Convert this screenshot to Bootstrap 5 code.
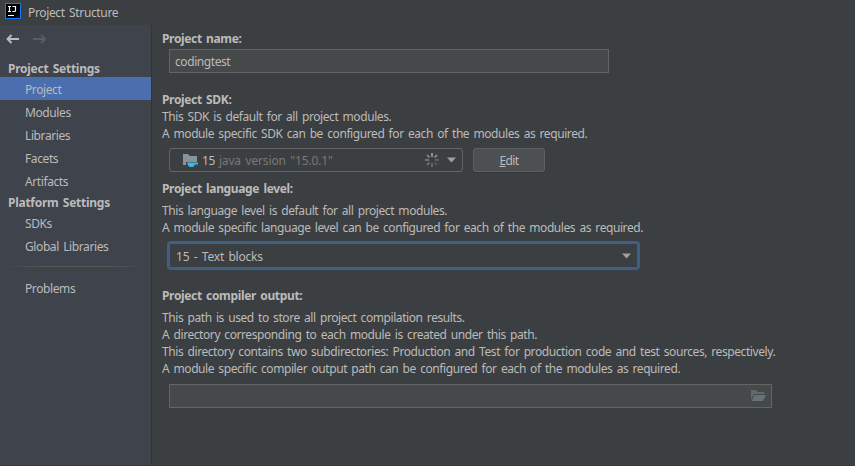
<!DOCTYPE html>
<html lang="en">
<head>
<meta charset="utf-8">
<title>Project Structure</title>
<link href="https://cdn.jsdelivr.net/npm/bootstrap@5.3.0/dist/css/bootstrap.min.css" rel="stylesheet">
<style>
body{background:#3c3f41;color:#bbb;font:12px/17px "Noto Sans","Open Sans",sans-serif;height:466px;overflow:hidden;letter-spacing:-.42px;word-spacing:1.55px}
svg{display:block;flex:none}
.window{height:466px;border-bottom:1px solid #40383d}
.titlebar{height:25px;padding-left:5px;gap:7px;letter-spacing:-.35px}
.logo{margin-bottom:3px}
.sidebar{width:152px;background:#3f434c;border-right:1px solid #323537}
.history{height:28px;padding-left:6px;gap:13px}
.group-title{height:20px;line-height:22px;padding-left:8px;font-weight:700;letter-spacing:-.27px}
.group-title.first{height:24px;line-height:32px}
.entry{height:23px;line-height:26px;padding-left:25px;letter-spacing:-.4px}
.entry.low{line-height:24px}
.entry.selected{background:#4b6eaf}
.divider{height:1px;margin:8px 6px 10px;background:linear-gradient(90deg,transparent,#55564f 20%,#55564f 80%,transparent)}
.content{padding:5px 0 0 10px}
.heading{font-weight:700;height:17px;letter-spacing:-.35px}
.field{height:24px;margin-left:7px;border:1px solid #646464;padding:0 5px}
.filled{background:#45494a}
.combo{border-radius:3px}
.w-name{width:440px;margin-top:2px;margin-bottom:18px}
.sdk-row{margin:6px 0 8px}
.w-sdk{width:294px;padding:0 6px 0 12px}
.lead-in{margin-top:5px}
.w-level{width:471px;margin:6px 0 18px 6px;height:27px;border:2px solid #3d6185;box-shadow:0 0 0 1px #3d6185;border-radius:3px;padding:1px 6px 0;letter-spacing:-.22px}
.w-out{width:603px;margin-top:7px;padding-right:5px}
.edit{width:72px;height:24px;background:#4c5052;border:1px solid #5e6060;border-radius:3px;color:#bbb;font-size:12px;line-height:24px;margin-left:10px;box-shadow:0 1px #36393b;letter-spacing:-.6px}
.version{color:#787878;letter-spacing:-.15px}
.arrow{margin-left:8px}
</style>
<script src="https://cdn.jsdelivr.net/npm/bootstrap@5.3.0/dist/js/bootstrap.bundle.min.js"></script>
</head>
<body>
<div class="window d-flex flex-column">
  <header class="titlebar d-flex align-items-center">
    <svg class="logo" width="16" height="16"><rect width="16" height="16" fill="#087cfa"/><rect x="1" y="1" width="14" height="14" fill="#000"/><path d="M3 3.500h3M4.500 3.500v5M3 8.500h3M7.500 3.500h3v4q0 1-1 1H7.500" fill="none" stroke="#fff" stroke-width="1.200"/><path d="M3 12.500h6" stroke="#fff"/></svg>
    <span>Project Structure</span>
  </header>
  <div class="d-flex flex-grow-1">
    <nav class="sidebar flex-shrink-0">
      <div class="history d-flex align-items-center">
        <svg width="14" height="12" fill="none" stroke="#bbbdc0" stroke-width="1.900"><path d="M13 6H1.500M5.500 2l-4 4 4 4"/></svg>
        <svg width="14" height="12" fill="none" stroke="#5b5d5f" stroke-width="1.900"><path d="M0 6h12M8 2l4 4-4 4"/></svg>
      </div>
      <div class="group-title first">Project Settings</div>
      <div class="entry selected">Project</div>
      <div class="entry">Modules</div>
      <div class="entry">Libraries</div>
      <div class="entry">Facets</div>
      <div class="entry">Artifacts</div>
      <div class="group-title">Platform Settings</div>
      <div class="entry low">SDKs</div>
      <div class="entry low">Global Libraries</div>
      <div class="divider"></div>
      <div class="entry low">Problems</div>
    </nav>
    <main class="content flex-grow-1 text-nowrap">
      <div class="heading">Project name:</div>
      <div class="field filled w-name d-flex align-items-center">codingtest</div>

      <div class="heading">Project SDK:</div>
      <div>This SDK is default for all project modules.</div>
      <div>A module specific SDK can be configured for each of the modules as required.</div>
      <div class="d-flex sdk-row">
        <div class="field combo w-sdk d-flex align-items-center">
          <svg width="16" height="16"><path d="M1 2h5l2 2h7v6H4v3H1z" fill="#87939a"/><path d="M5 10.500h11v2H13q-1 2.500-3 2.500H8q-2-.5-3-4.500z" fill="#40b6e0"/></svg>
          <span class="ms-1">15</span><span class="version ms-1">java version "15.0.1"</span>
          <svg class="ms-auto" width="14" height="14" stroke-width="2"><path d="M7 0v4" stroke="#8b8f91"/><path d="M12 2 9.500 4.500" stroke="#7f8385"/><path d="M10 7h4" stroke="#5d6062"/><path d="m9.500 9.500 2.500 2.500" stroke="#54585a"/><path d="M7 10v4" stroke="#65686a"/><path d="m2 12 2.500-2.500" stroke="#6b6f71"/><path d="M0 7h4" stroke="#717577"/><path d="m2 2 2.500 2.500" stroke="#7b7f81"/></svg>
          <svg class="arrow" width="9" height="6"><path d="M0 .5h9L4.500 5.500z" fill="#9da0a2"/></svg>
        </div>
        <button class="btn edit p-0"><u>E</u>dit</button>
      </div>

      <div class="heading">Project language level:</div>
      <div class="lead-in">This language level is default for all project modules.</div>
      <div>A module specific language level can be configured for each of the modules as required.</div>
      <div class="w-level d-flex align-items-center">15 - Text blocks
        <svg class="ms-auto" width="9" height="6"><path d="M0 .5h9L4.500 5.500z" fill="#9da0a2"/></svg>
      </div>

      <div class="heading">Project compiler output:</div>
      <div class="lead-in">This path is used to store all project compilation results.</div>
      <div>A directory corresponding to each module is created under this path.</div>
      <div>This directory contains two subdirectories: Production and Test for production code and test sources, respectively.</div>
      <div>A module specific compiler output path can be configured for each of the modules as required.</div>
      <div class="field filled w-out d-flex align-items-center justify-content-end">
        <svg width="15" height="12"><path d="M0 0h5l1.500 2H13v2H3L0 10z" fill="#5f696e"/><path d="M3.500 5H15l-3 6H.5z" fill="#667178"/></svg>
      </div>
    </main>
  </div>
</div>
</body>
</html>
